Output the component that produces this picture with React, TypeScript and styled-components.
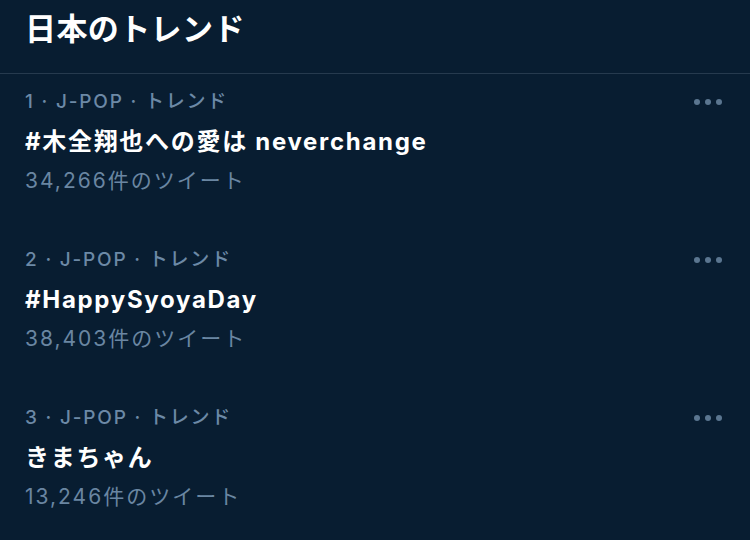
import React from "react";
import styled, { createGlobalStyle } from "styled-components";

const Global = createGlobalStyle`
  html, body { margin: 0; padding: 0; background: #081d31; }
  body { font-family: Inter, "Noto Sans CJK JP", sans-serif; -webkit-font-smoothing: antialiased; }
`;

const Page = styled.div`
  width: 750px;
  height: 540px;
  background: #081d31;
  overflow: hidden;
`;

const Header = styled.div`
  height: 74px;
  border-bottom: 1px solid #263a4e;
  box-sizing: border-box;
  padding: 9px 25px 0;
`;

const HeaderTitle = styled.h1`
  margin: 0;
  font-size: 31px;
  line-height: 40px;
  font-weight: 700;
  color: #ffffff;
  letter-spacing: 0.4px;
`;

const List = styled.div`
  display: flex;
  flex-direction: column;
`;

const Row = styled.div`
  height: 158px;
  box-sizing: border-box;
  padding: 16px 28px 0 25px;
  display: flex;
  justify-content: space-between;
  align-items: flex-start;
`;

const Body = styled.div`
  display: flex;
  flex-direction: column;
`;

const Meta = styled.div`
  font-size: 19px;
  line-height: 24px;
  color: #6c89a6;
  font-weight: 500;
  letter-spacing: 1.8px;
`;

const Title = styled.div`
  margin-top: 12px;
  font-size: 24px;
  line-height: 32px;
  font-weight: 700;
  color: #ffffff;
  letter-spacing: 1.7px;
`;

const Count = styled.div`
  margin-top: 11px;
  font-size: 21px;
  line-height: 24px;
  color: #6a86a2;
  letter-spacing: 2px;
`;

const More = styled.div`
  display: flex;
  gap: 5px;
  margin-top: 9px;
`;

const Dot = styled.span`
  width: 6px;
  height: 6px;
  border-radius: 50%;
  background: #5b7690;
`;

const trends = [
  { rank: 1, title: "#木全翔也への愛は neverchange", count: "34,266" },
  { rank: 2, title: "#HappySyoyaDay", count: "38,403" },
  { rank: 3, title: "きまちゃん", count: "13,246" },
];

export default function App() {
  return (
    <Page>
      <Global />
      <Header>
        <HeaderTitle>日本のトレンド</HeaderTitle>
      </Header>
      <List>
        {trends.map((t) => (
          <Row key={t.rank}>
            <Body>
              <Meta>{t.rank} · J-POP · トレンド</Meta>
              <Title>{t.title}</Title>
              <Count>{t.count}件のツイート</Count>
            </Body>
            <More>
              <Dot />
              <Dot />
              <Dot />
            </More>
          </Row>
        ))}
      </List>
    </Page>
  );
}
